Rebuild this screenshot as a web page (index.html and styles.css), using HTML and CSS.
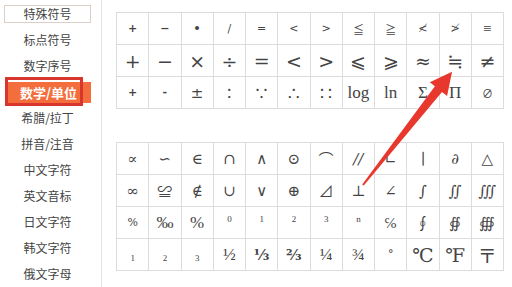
FILE: index.html
```html
<!doctype html>
<html lang="zh">
  <head>
    <meta charset="UTF-8" />
    <title>数学/单位 符号</title>
    <link rel="stylesheet" href="styles.css">
  </head>
  <body>
    <div class="page">
      <ul class="side">
        <li class="side-item"><span class="side-label boxed">特殊符号</span></li>
        <li class="side-item"><span class="side-label">标点符号</span></li>
        <li class="side-item"><span class="side-label">数字序号</span></li>
        <li class="side-item active"><span class="side-label">数学/单位</span></li>
        <li class="side-item"><span class="side-label">希腊/拉丁</span></li>
        <li class="side-item"><span class="side-label">拼音/注音</span></li>
        <li class="side-item"><span class="side-label">中文字符</span></li>
        <li class="side-item"><span class="side-label">英文音标</span></li>
        <li class="side-item"><span class="side-label">日文字符</span></li>
        <li class="side-item"><span class="side-label">韩文字符</span></li>
        <li class="side-item"><span class="side-label">俄文字母</span></li>
      </ul>

      <div class="main">
        <div class="sym-grid">
          <span class="sym sm b">+</span><span class="sym sm b">−</span><span class="sym sm b">•</span><span class="sym sm">/</span><span class="sym sm">=</span><span class="sym sm">&lt;</span><span class="sym sm">&gt;</span><span class="sym sm">≦</span><span class="sym sm">≧</span><span class="sym sm">≮</span><span class="sym sm">≯</span><span class="sym sm">≡</span>
          <span class="sym lg">+</span><span class="sym lg">−</span><span class="sym lg">×</span><span class="sym lg">÷</span><span class="sym lg">=</span><span class="sym lg">&lt;</span><span class="sym lg">&gt;</span><span class="sym lg">⩽</span><span class="sym lg">⩾</span><span class="sym lg">≈</span><span class="sym lg">≒</span><span class="sym lg">≠</span>
          <span class="sym sm b">+</span><span class="sym sm b">-</span><span class="sym md">±</span><span class="sym md">∶</span><span class="sym md">∵</span><span class="sym md">∴</span><span class="sym md">∷</span><span class="sym tm">log</span><span class="sym tm">ln</span><span class="sym tm">Σ</span><span class="sym tm">Π</span><span class="sym sm">∅</span>
        </div>

        <div class="sym-grid second">
          <span class="sym md">∝</span><span class="sym md">∽</span><span class="sym md">∈</span><span class="sym md">∩</span><span class="sym md">∧</span><span class="sym md">⊙</span><span class="sym md">⌒</span><span class="sym md it">//</span><span class="sym md">∟</span><span class="sym md">∣</span><span class="sym md">∂</span><span class="sym md">△</span>
          <span class="sym md">∞</span><span class="sym md">≌</span><span class="sym md">∉</span><span class="sym md">∪</span><span class="sym md">∨</span><span class="sym md">⊕</span><span class="sym md">⊿</span><span class="sym md">⊥</span><span class="sym md">∠</span><span class="sym md">∫</span><span class="sym md">∬</span><span class="sym md">∭</span>
          <span class="sym sm">%</span><span class="sym tm">‰</span><span class="sym tm">%</span><span class="sym sup">0</span><span class="sym sup">1</span><span class="sym sup">2</span><span class="sym sup">3</span><span class="sym sup">n</span><span class="sym md">℅</span><span class="sym md">∮</span><span class="sym md">∯</span><span class="sym md">∰</span>
          <span class="sym sub">1</span><span class="sym sub">2</span><span class="sym sub">3</span><span class="sym tm">½</span><span class="sym md b">⅓</span><span class="sym md b">⅔</span><span class="sym tm">¼</span><span class="sym tm">¾</span><span class="sym sm">°</span><span class="sym lg">℃</span><span class="sym lg">℉</span><span class="sym lg">〒</span>
        </div>
      </div>

      <svg class="pointer" width="512" height="287" viewBox="0 0 512 287">
        <g transform="translate(363 185) rotate(-51.8)">
          <polygon points="0,-1 122,-4.5 122,-11 144,0 122,11 122,4.5 0,1" fill="#e8382d" />
        </g>
      </svg>
    </div>
  </body>
</html>
```

FILE: styles.css
```css
body {
  margin: 0;
  background: #fff;
  color: #333;
  font-family: "Noto Sans CJK SC", "Noto Sans", sans-serif;
}

.page {
  position: relative;
  display: flex;
  width: 512px;
  height: 287px;
  overflow: hidden;
}

/* left category list */
.side {
  list-style: none;
  margin: 0;
  padding: 1px 0 0;
  width: 101px;
  border-right: 1px solid #e3e3e3;
  flex-shrink: 0;
}

.side-item {
  position: relative;
  height: 26px;
  display: flex;
  align-items: center;
  font-size: 12px;
  color: #444;
}

.side-label {
  width: 87px;
  margin-left: 4px;
  text-align: center;
  line-height: 18px;
}

.side-label.boxed {
  box-sizing: border-box;
  height: 18px;
  line-height: 16px;
  border: 1px solid #dccfc7;
}

.side-item.active .side-label {
  width: 85px;
  margin-left: 6px;
  height: 21px;
  line-height: 21px;
  background: #f46d3c;
  color: #fff;
  font-weight: 700;
  font-size: 13px;
}

/* red annotation frame */
.side-item.active::after {
  content: "";
  position: absolute;
  left: 5px;
  top: -2px;
  width: 78px;
  height: 29px;
  box-sizing: border-box;
  border: 3px solid #d8362d;
}

/* symbol tables */
.main {
  padding: 12px 0 0 14px;
}

.sym-grid {
  display: grid;
  grid-template-columns: repeat(12, 1fr);
  width: 388px;
  box-sizing: border-box;
  border-top: 1px solid #dcdcdc;
  border-left: 1px solid #dcdcdc;
}

.sym-grid.second {
  margin-top: 33px;
}

.sym {
  height: 32px;
  box-sizing: border-box;
  border-right: 1px solid #dcdcdc;
  border-bottom: 1px solid #dcdcdc;
  display: flex;
  align-items: center;
  justify-content: center;
  font-family: "DejaVu Serif", "Liberation Serif", "Noto Sans CJK SC", serif;
  color: #444;
}

.sym.sm { font-size: 11px; }
.sym.md { font-size: 15px; }
.sym.lg { font-size: 19px; }
.sym.b { font-weight: 700; }
.sym.it { font-style: italic; }

.sym.tm {
  font-family: "Liberation Serif", "DejaVu Serif", serif;
  font-size: 17px;
}

.sym.sup,
.sym.sub {
  font-family: "Liberation Serif", serif;
  font-size: 9px;
}

.sym.sup { padding-bottom: 8px; }
.sym.sub { padding-top: 6px; }

.pointer {
  position: absolute;
  left: 0;
  top: 0;
  pointer-events: none;
}
```
